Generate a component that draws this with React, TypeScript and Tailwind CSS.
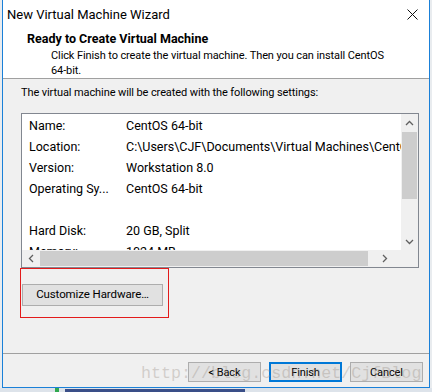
import React from 'react';

const SETTINGS = [
  { label: 'Name:', value: 'CentOS 64-bit' },
  { label: 'Location:', value: 'C:\\Users\\CJF\\Documents\\Virtual Machines\\CentOS 64-bit' },
  { label: 'Version:', value: 'Workstation 8.0' },
  { label: 'Operating Sy...', value: 'CentOS 64-bit' },
  { label: '', value: '' },
  { label: 'Hard Disk:', value: '20 GB, Split' },
  { label: 'Memory:', value: '1024 MB' },
];

function Chevron({ dir }: { dir: 'up' | 'down' | 'left' | 'right' }) {
  const d = {
    up: 'M1 6 L4.5 2.5 L8 6',
    down: 'M1 3 L4.5 6.5 L8 3',
    left: 'M6 1 L2.5 4.5 L6 8',
    right: 'M3 1 L6.5 4.5 L3 8',
  }[dir];
  return (
    <svg width="9" height="9" viewBox="0 0 9 9">
      <path d={d} fill="none" stroke="#606060" strokeWidth="1.3" />
    </svg>
  );
}

export default function App() {
  return (
    <div className="relative w-[432px] h-[392px] overflow-hidden bg-[#e9ecef] flex flex-col font-['Roboto',sans-serif] text-[11px] tracking-[-0.1px] text-black">
      <div className="ml-[2px] w-[428px] h-[388px] shrink-0 border-x border-b border-[#1a80d8] flex flex-col bg-[#f0f0f0]">
        {/* title bar */}
        <div className="h-[28px] bg-white flex items-center justify-between pl-[4px] pr-[11px]">
          <span className="text-[13px] tracking-normal leading-none">New Virtual Machine Wizard</span>
          <svg width="11" height="11" viewBox="0 0 11 11">
            <path d="M0.5 0.5 L10.5 10.5 M10.5 0.5 L0.5 10.5" stroke="#111" strokeWidth="1" />
          </svg>
        </div>

        {/* header */}
        <div className="h-[51px] bg-white border-b border-[#a0a0a0] pl-[24px] pt-[2px]">
          <div className="font-bold text-[12.5px] tracking-normal leading-[18px]">Ready to Create Virtual Machine</div>
          <div className="pl-[24px] leading-[15px] w-[370px]">
            Click Finish to create the virtual machine. Then you can install CentOS 64-bit.
          </div>
        </div>

        {/* body */}
        <div className="flex-1 flex flex-col px-[18px] pt-[6px]">
          <div className="leading-[16px]">The virtual machine will be created with the following settings:</div>

          <div className="mt-[12px] w-[398px] h-[155px] border border-[#828790] flex flex-col bg-white">
            <div className="flex flex-1 min-h-0">
              <div className="flex-1 overflow-hidden pt-[2px] pl-[7px] text-[12.5px] tracking-normal">
                {SETTINGS.map((s, i) => (
                  <div key={i} className="h-[21px] flex items-center whitespace-nowrap">
                    <span className="w-[97px] shrink-0">{s.label}</span>
                    <span>{s.value}</span>
                  </div>
                ))}
              </div>
              <div className="w-[17px] bg-[#f0f0f0] flex flex-col items-center">
                <div className="h-[18px] flex items-center justify-center"><Chevron dir="up" /></div>
                <div className="w-[15px] h-[67px] bg-[#cdcdcd]" />
                <div className="flex-1" />
                <div className="h-[18px] flex items-center justify-center"><Chevron dir="down" /></div>
              </div>
            </div>
            <div className="h-[17px] bg-[#f0f0f0] flex items-center">
              <div className="w-[18px] flex justify-center"><Chevron dir="left" /></div>
              <div className="w-[328px] h-[15px] bg-[#cdcdcd]" />
              <div className="w-[33px] flex justify-center"><Chevron dir="right" /></div>
            </div>
          </div>

          <div className="w-[149px] h-[50px] -ml-px border border-[#e31b1b] pl-px pt-[15px]">
            <button className="w-[141px] h-[22px] bg-[#e1e1e1] border border-[#adadad] text-[11.5px] leading-none">
              Customize Hardware…
            </button>
          </div>
        </div>

        {/* footer */}
        <div className="h-[34px] border-t border-[#a0a0a0] flex justify-end items-start gap-[8px] pr-[6px] pt-[8px]">
          <button className="w-[73px] h-[20px] bg-[#e1e1e1] border border-[#adadad] leading-none">&lt; Back</button>
          <button className="w-[73px] h-[20px] bg-[#e1e1e1] border-2 border-[#0078d7] leading-none">Finish</button>
          <button className="w-[73px] h-[20px] bg-[#e1e1e1] border border-[#adadad] leading-none">Cancel</button>
        </div>
      </div>

      {/* desktop strip below the window */}
      <div className="flex-1 flex items-center gap-[6px] pl-[55px] bg-[#dde3ea]">
        <div className="w-[4px] h-[4px] bg-[#2fa84f]" />
        <div className="w-[180px] h-[3px] bg-[#3a4f88]" />
      </div>

      {/* watermark */}
      <div className="absolute left-[141px] top-[362px] font-['Liberation_Mono',monospace] text-[16.7px] tracking-normal leading-[24px] text-[rgba(150,140,130,0.35)] pointer-events-none">
        http://blog.csdn.net/CjfBlog
      </div>
    </div>
  );
}
